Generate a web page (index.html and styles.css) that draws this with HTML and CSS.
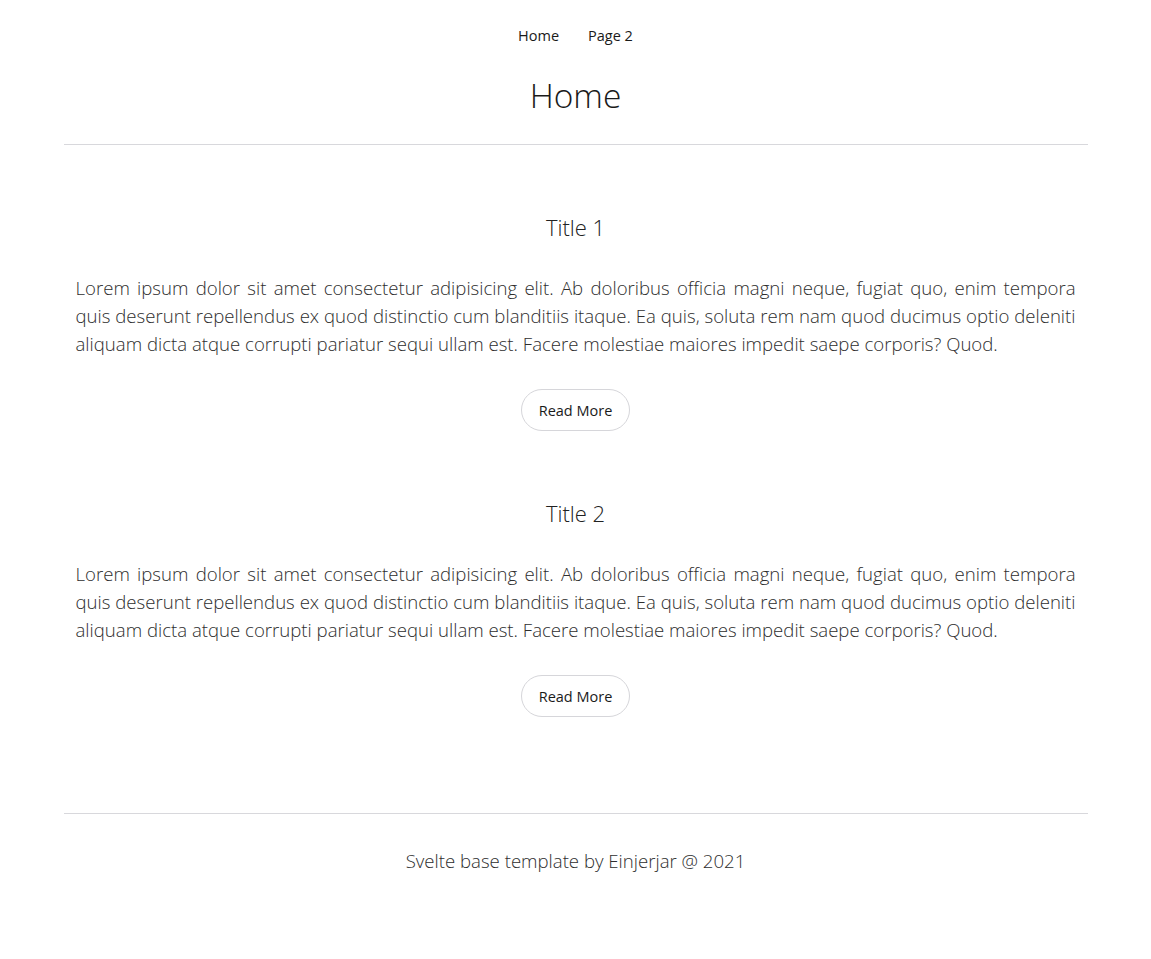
FILE: index.html
```html
<!DOCTYPE html>
<html lang="en">
<head>
<meta charset="utf-8">
<title>Home</title>
<link rel="stylesheet" href="styles.css">
</head>
<body>
<div class="container">
  <nav class="nav">
    <a class="nav-link" href="#">Home</a>
    <a class="nav-link" href="#">Page 2</a>
  </nav>
  <header class="header">
    <h1 class="page-title">Home</h1>
  </header>
  <main class="main">
    <section class="post">
      <h2 class="post-title">Title 1</h2>
      <p class="post-text">Lorem ipsum dolor sit amet consectetur adipisicing elit. Ab doloribus officia magni neque, fugiat quo, enim tempora quis deserunt repellendus ex quod distinctio cum blanditiis itaque. Ea quis, soluta rem nam quod ducimus optio deleniti aliquam dicta atque corrupti pariatur sequi ullam est. Facere molestiae maiores impedit saepe corporis? Quod.</p>
      <button class="btn">Read More</button>
    </section>
    <section class="post">
      <h2 class="post-title">Title 2</h2>
      <p class="post-text">Lorem ipsum dolor sit amet consectetur adipisicing elit. Ab doloribus officia magni neque, fugiat quo, enim tempora quis deserunt repellendus ex quod distinctio cum blanditiis itaque. Ea quis, soluta rem nam quod ducimus optio deleniti aliquam dicta atque corrupti pariatur sequi ullam est. Facere molestiae maiores impedit saepe corporis? Quod.</p>
      <button class="btn">Read More</button>
    </section>
  </main>
  <footer class="footer">
    <p class="footer-text">Svelte base template by Einjerjar @ 2021</p>
  </footer>
</div>
</body>
</html>
```

FILE: styles.css
```css
* { box-sizing: border-box; }
body {
  margin: 0;
  background: #fff;
  color: #333;
  font-family: "Open Sans", "Noto Sans", sans-serif;
  font-weight: 300;
}
.container {
  width: 1024px;
  margin: 0 auto;
}
.nav {
  display: flex;
  justify-content: center;
  gap: 29px;
  padding-top: 24px;
}
.nav-link {
  font-size: 14.5px;
  line-height: 24px;
  font-weight: 400;
  color: #1a1a1a;
  text-decoration: none;
}
.header {
  border-bottom: 1px solid #d8d8dc;
  padding: 27px 0 29px;
}
.page-title {
  margin: 0;
  text-align: center;
  font-size: 33.5px;
  line-height: 40px;
  font-weight: 300;
  color: #1a1a1a;
}
.main {
  padding: 67px 12px 96px;
  border-bottom: 1px solid #d8d8dc;
}
.post {
  display: flex;
  flex-direction: column;
  align-items: center;
}
.post + .post { margin-top: 67px; }
.post-title {
  margin: 0;
  font-size: 22px;
  line-height: 30px;
  font-weight: 300;
  color: #222;
}
.post-text {
  margin: 32px 0 31px;
  font-size: 18.6px;
  line-height: 28px;
  text-align: justify;
  color: #2e2e2e;
}
.btn {
  height: 42px;
  padding: 0 17px;
  border: 1px solid #d6d6da;
  border-radius: 21px;
  background: #fff;
  font-family: inherit;
  font-size: 14.5px;
  font-weight: 400;
  color: #1a1a1a;
}
.footer {
  padding-top: 33px;
}
.footer-text {
  margin: 0;
  text-align: center;
  font-size: 18.6px;
  line-height: 28px;
  color: #2e2e2e;
}
```
